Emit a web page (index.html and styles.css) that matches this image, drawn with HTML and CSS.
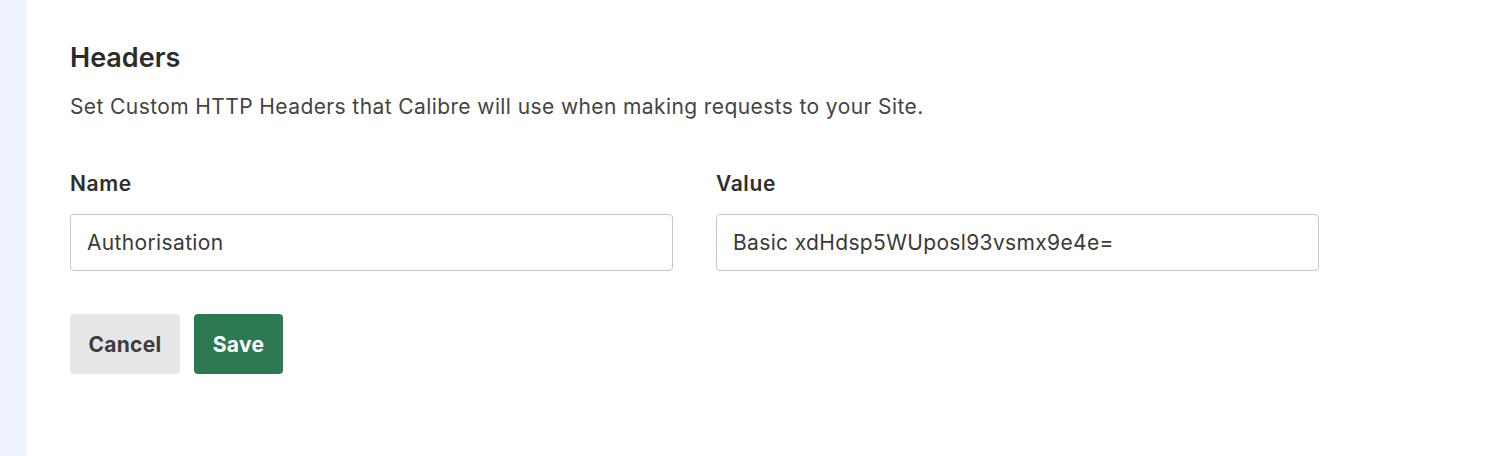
FILE: index.html
```html
<!DOCTYPE html>
<html>
<head>
<meta charset="utf-8">
<link rel="stylesheet" href="styles.css">
</head>
<body>
<div class="page">
  <aside class="sidebar"></aside>
  <main class="main">
    <h2 class="title">Headers</h2>
    <p class="desc">Set Custom HTTP Headers that Calibre will use when making requests to your Site.</p>
    <div class="fields">
      <label class="field">
        <span class="label">Name</span>
        <input class="input" type="text" value="Authorisation">
      </label>
      <label class="field">
        <span class="label">Value</span>
        <input class="input" type="text" value="Basic xdHdsp5WUposl93vsmx9e4e=">
      </label>
    </div>
    <div class="actions">
      <button class="btn btn-cancel">Cancel</button>
      <button class="btn btn-save">Save</button>
    </div>
  </main>
</div>
</body>
</html>
```
FILE: styles.css
```css
* { box-sizing: border-box; }
html, body { margin: 0; padding: 0; background: #fff; }
body { font-family: Inter, "Liberation Sans", Arial, sans-serif; color: #333; }
.page { display: flex; height: 456px; }
.sidebar { width: 27px; flex: none; background: #eef3fd; }
.main { padding: 40px 0 0 43px; flex: 1; }
.title { margin: 0; font-size: 27px; font-weight: 600; line-height: 36px; color: #2b2b2b; }
.desc { margin: 18px 0 0; font-size: 21px; letter-spacing: 0.4px; line-height: 26px; color: #444; }
.fields { display: flex; gap: 43px; margin-top: 51px; }
.field { display: flex; flex-direction: column; width: 603px; }
.label { font-size: 21px; letter-spacing: 0.6px; font-weight: 600; line-height: 26px; color: #2e2e2e; }
.input { margin-top: 17px; height: 57px; border: 1px solid #c7c7c7; border-radius: 4px; padding: 0 16px; font-family: inherit; font-size: 21px; letter-spacing: 0.35px; color: #3a3a3a; background: #fff; outline: none; }
.actions { display: flex; gap: 14px; margin-top: 43px; }
.btn { height: 60px; border: none; border-radius: 4px; font-family: inherit; font-size: 21px; letter-spacing: 0.3px; font-weight: 700; padding: 0; }
.btn-cancel { width: 110px; background: #e6e6e6; color: #3d3d3d; }
.btn-save { width: 89px; background: #2c7954; color: #fff; }
```
